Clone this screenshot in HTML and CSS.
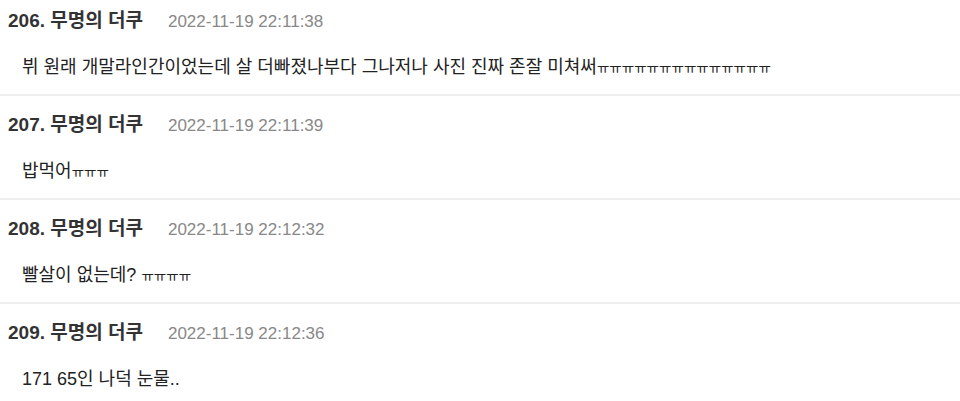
FILE: index.html
```html
<!DOCTYPE html>
<html lang="ko">
<head>
<meta charset="utf-8">
<link rel="stylesheet" href="styles.css">
</head>
<body>
<ul class="comments">
  <li class="comment first">
    <div class="head"><span class="name">206. 무명의 더쿠</span><span class="date">2022-11-19 22:11:38</span></div>
    <div class="body">뷔 원래 개말라인간이었는데 살 더빠졌나부다 그나저나 사진 진짜 존잘 미쳐써<span class="jamo">ㅠㅠㅠㅠㅠㅠㅠㅠㅠㅠㅠㅠㅠㅠ</span></div>
  </li>
  <li class="comment">
    <div class="head"><span class="name">207. 무명의 더쿠</span><span class="date">2022-11-19 22:11:39</span></div>
    <div class="body">밥먹어<span class="jamo">ㅠㅠㅠ</span></div>
  </li>
  <li class="comment">
    <div class="head"><span class="name">208. 무명의 더쿠</span><span class="date">2022-11-19 22:12:32</span></div>
    <div class="body">빨살이 없는데? <span class="jamo">ㅠㅠㅠㅠ</span></div>
  </li>
  <li class="comment">
    <div class="head"><span class="name">209. 무명의 더쿠</span><span class="date">2022-11-19 22:12:36</span></div>
    <div class="body">171 65인 나덕 눈물..</div>
  </li>
</ul>
</body>
</html>
```
FILE: styles.css
```css
html, body {
  margin: 0;
  padding: 0;
  background: #fff;
}
body {
  font-family: "Liberation Sans", "Noto Sans CJK KR", sans-serif;
  color: #222;
  overflow: hidden;
}
.comments {
  list-style: none;
  margin: 0;
  padding: 0;
}
.comment {
  padding: 17px 8px 15px;
  border-top: 2px solid #efefef;
}
.comment.first {
  padding-top: 9px;
  border-top: 0;
}
.head {
  display: flex;
  align-items: baseline;
  gap: 25px;
  height: 24px;
  line-height: 24px;
}
.name {
  font-size: 19px;
  font-weight: bold;
  color: #333;
  line-height: 24px;
}
.date {
  font-size: 17px;
  color: #888;
  line-height: 24px;
}
.body {
  margin-top: 22px;
  padding-left: 14px;
  height: 24px;
  font-size: 18px;
  line-height: 24px;
  color: #222;
}
.jamo {
  font-size: 13.5px;
  line-height: 1;
}
```
